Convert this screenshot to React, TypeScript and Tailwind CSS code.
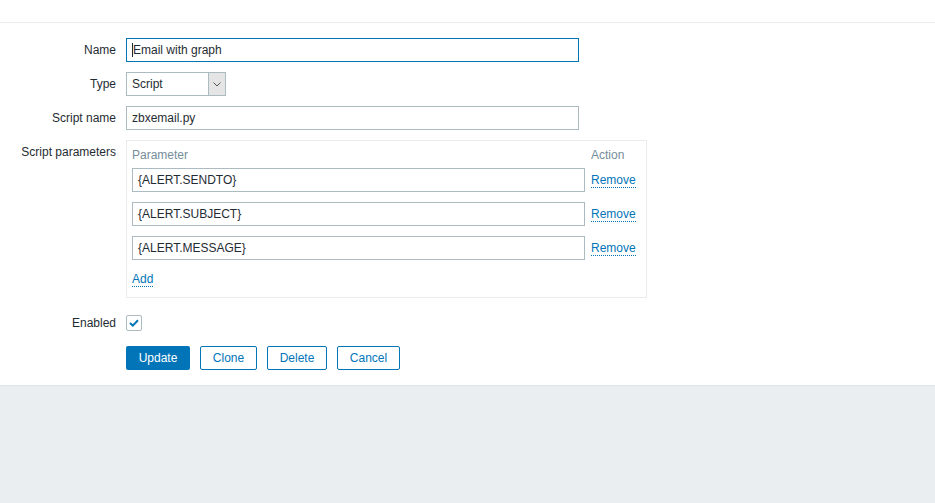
export default function App() {
  const params = ["{ALERT.SENDTO}", "{ALERT.SUBJECT}", "{ALERT.MESSAGE}"];

  return (
    <div className="min-h-[503px] flex flex-col bg-[#ebeef0] text-[12px] text-[#1f2c33] font-['Liberation_Sans',Arial,sans-serif]">
      {/* Header strip */}
      <div className="h-[23px] bg-white border-b border-[#ebebeb]"></div>

      {/* Form */}
      <div className="bg-white pt-[15px] pb-[15px] border-b border-[#dfe4e7]">
        {/* Name */}
        <div className="flex items-center h-[24px]">
          <label className="w-[116px] text-right pr-0">Name</label>
          <div className="ml-[10px] w-[453px] h-[24px] border border-[#0275b8] px-[5px] flex items-center">
            <span className="w-px h-[14px] bg-[#1f2c33]"></span>
            <span>Email with graph</span>
          </div>
        </div>

        {/* Type */}
        <div className="flex items-center h-[24px] mt-[10px]">
          <label className="w-[116px] text-right">Type</label>
          <div className="ml-[10px] w-[100px] h-[24px] border border-[#acbbc2] flex">
            <div className="flex-1 flex items-center px-[5px]">Script</div>
            <div className="w-[17px] bg-[#e5e5e5] border-l border-[#acbbc2] flex items-center justify-center">
              <svg width="8" height="5" viewBox="0 0 8 5" fill="none">
                <path d="M0.5 0.5L4 4L7.5 0.5" stroke="#555" strokeWidth="1" />
              </svg>
            </div>
          </div>
        </div>

        {/* Script name */}
        <div className="flex items-center h-[24px] mt-[10px]">
          <label className="w-[116px] text-right">Script name</label>
          <div className="ml-[10px] w-[453px] h-[24px] border border-[#acbbc2] px-[5px] flex items-center">
            zbxemail.py
          </div>
        </div>

        {/* Script parameters */}
        <div className="flex items-start mt-[10px]">
          <label className="w-[116px] text-right pt-[3px]">Script parameters</label>
          <div className="ml-[10px] w-[521px] h-[158px] border border-[#ebebeb] pt-[6px] px-[5px]">
            <div className="flex h-[16px] items-center text-[#768d99] mb-[5px]">
              <div className="w-[453px]">Parameter</div>
              <div className="ml-[6px]">Action</div>
            </div>
            <div className="flex flex-col gap-[10px]">
              {params.map((p) => (
                <div key={p} className="flex items-center">
                  <div className="w-[453px] h-[24px] border border-[#acbbc2] px-[5px] flex items-center">
                    {p}
                  </div>
                  <a className="ml-[6px] text-[#0275b8] border-b border-dotted border-[#0275b8] leading-[14px]">
                    Remove
                  </a>
                </div>
              ))}
            </div>
            <div className="mt-[10px]">
              <a className="text-[#0275b8] border-b border-dotted border-[#0275b8] leading-[14px]">Add</a>
            </div>
          </div>
        </div>

        {/* Enabled */}
        <div className="flex items-center h-[24px] mt-[13px]">
          <label className="w-[116px] text-right">Enabled</label>
          <div className="ml-[10px] w-[16px] h-[16px] border border-[#acbbc2] rounded-[2px] flex items-center justify-center">
            <svg width="10" height="8" viewBox="0 0 10 8" fill="none">
              <path d="M1 4L3.8 6.6L9 1.2" stroke="#0275b8" strokeWidth="2" />
            </svg>
          </div>
        </div>

        {/* Buttons */}
        <div className="flex items-center mt-[11px] pl-[126px] gap-[10px]">
          <button className="h-[24px] bg-[#0275b8] text-white rounded-[2px] w-[64px]">Update</button>
          <button className="h-[24px] w-[57px] border border-[#0275b8] text-[#0275b8] rounded-[2px] bg-white">Clone</button>
          <button className="h-[24px] w-[60px] border border-[#0275b8] text-[#0275b8] rounded-[2px] bg-white">Delete</button>
          <button className="h-[24px] w-[63px] border border-[#0275b8] text-[#0275b8] rounded-[2px] bg-white">Cancel</button>
        </div>
      </div>

      <div className="flex-1"></div>
    </div>
  );
}
